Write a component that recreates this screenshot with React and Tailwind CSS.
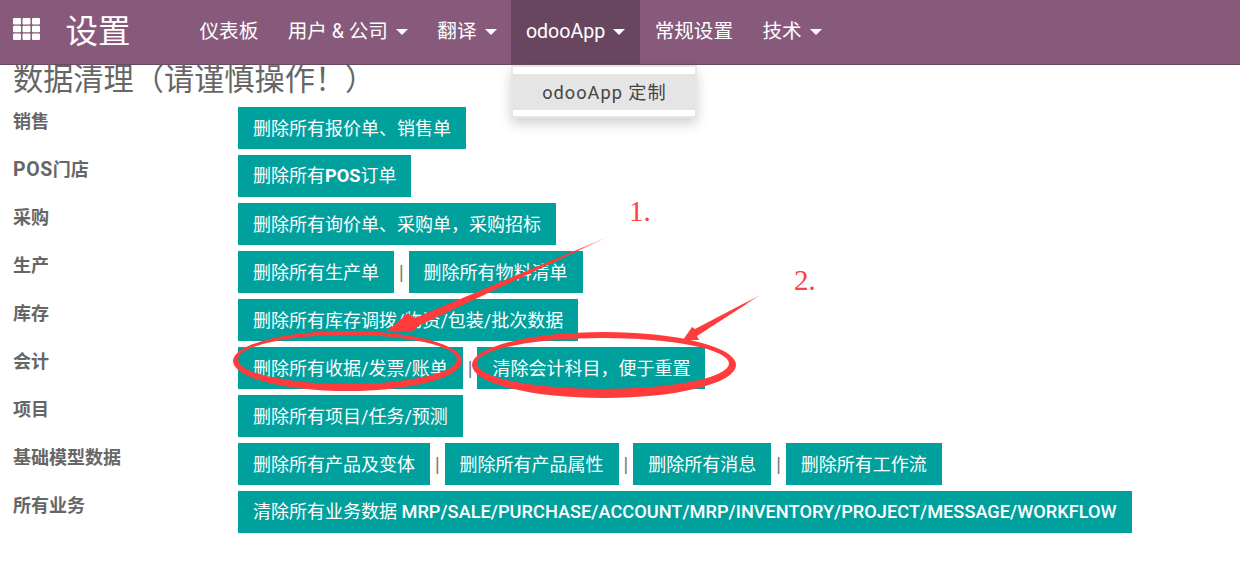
const FONT = "font-['Roboto','Noto_Sans_CJK_SC',sans-serif]"

const navItems = [
  { label: '仪表板' },
  { label: '用户 & 公司', caret: true },
  { label: '翻译', caret: true },
  { label: 'odooApp', caret: true, active: true },
  { label: '常规设置' },
  { label: '技术', caret: true },
]

const rows = [
  { label: '销售', buttons: ['删除所有报价单、销售单'] },
  { label: <><span className="text-[19.5px] tracking-[0.6px]">POS</span>门店</>, buttons: [<>删除所有<b className="text-[18.2px] font-bold">POS</b>订单</>] },
  { label: '采购', buttons: ['删除所有询价单、采购单，采购招标'] },
  { label: '生产', buttons: ['删除所有生产单', '删除所有物料清单'] },
  { label: '库存', buttons: ['删除所有库存调拨/物资/包装/批次数据'] },
  { label: '会计', buttons: ['删除所有收据/发票/账单', '清除会计科目，便于重置'] },
  { label: '项目', buttons: ['删除所有项目/任务/预测'] },
  { label: '基础模型数据', buttons: ['删除所有产品及变体', '删除所有产品属性', '删除所有消息', '删除所有工作流'] },
  { label: '所有业务', buttons: [<>清除所有业务数据 <span className="text-[18.2px] font-medium tracking-[0.02px]">MRP/SALE/PURCHASE/ACCOUNT/MRP/INVENTORY/PROJECT/MESSAGE/WORKFLOW</span></>] },
]

function Caret() {
  return <span className="ml-2 inline-block border-x-[6px] border-t-[6px] border-x-transparent border-t-white" />
}

function AppsIcon() {
  return (
    <svg width="27" height="22" viewBox="0 0 27 22" className="-mt-[6px] fill-white">
      {[0, 7.75, 15.5].map((y) =>
        [0, 9.5, 19].map((x) => <rect key={`${x}-${y}`} x={x} y={y} width="8" height="6.5" rx="1" />)
      )}
    </svg>
  )
}

function Navbar() {
  return (
    <nav className="flex h-[65px] items-stretch border-b border-[#6b4862] bg-[#875a7b] text-white">
      <div className="ml-[13px] flex w-[52.5px] items-center"><AppsIcon /></div>
      <div className="flex w-[119.3px] items-center text-[32.5px]">设置</div>
      <div className="flex text-[19.6px]">
        {navItems.map((item) => (
          <div
            key={item.label}
            className={`relative flex items-center px-[14.7px] ${item.active ? 'bg-[#68465f]' : ''}`}
          >
            {item.label}
            {item.caret && <Caret />}
            {item.active && <Dropdown />}
          </div>
        ))}
      </div>
    </nav>
  )
}

function Dropdown() {
  return (
    <div className="absolute left-0 top-[65px] z-10 w-[186px] border-2 border-[#e6e6e6] bg-white pb-[6px] pt-[7px] shadow-[0_6px_12px_rgba(0,0,0,0.18)]">
      <div className="flex h-[36px] items-center bg-[#e5e5e5] pl-[29px] pt-[2px] text-[18.2px] tracking-[1px] text-[#444]">
        odooApp 定制
      </div>
    </div>
  )
}

function Row({ label, buttons }) {
  return (
    <div className="flex">
      <div className="w-[225px] shrink-0 pt-[1px] text-[18px] font-bold leading-[28px] text-[#666]">{label}</div>
      <div className="flex items-center">
        {buttons.map((text, i) => (
          <div key={i} className="flex items-center">
            {i > 0 && <span className="w-[14.6px] text-center font-['Liberation_Sans',sans-serif] text-[18px] text-[#777]">|</span>}
            <button className="h-[42px] whitespace-nowrap bg-[#00a09d] px-[15px] text-[18px] text-white">{text}</button>
          </div>
        ))}
      </div>
    </div>
  )
}

function Annotations() {
  return (
    <>
      <svg width="1240" height="562" className="pointer-events-none absolute left-0 top-0 z-20">
        <defs>
          <linearGradient id="tail1" x1="612" y1="235" x2="400" y2="330" gradientUnits="userSpaceOnUse">
            <stop offset="0" stopColor="#ff3b3b" stopOpacity="0.1" />
            <stop offset="0.2" stopColor="#ff3b3b" />
          </linearGradient>
          <linearGradient id="tail2" x1="762" y1="294" x2="690" y2="335" gradientUnits="userSpaceOnUse">
            <stop offset="0" stopColor="#ff3b3b" stopOpacity="0.2" />
            <stop offset="0.25" stopColor="#ff3b3b" />
          </linearGradient>
        </defs>
        <path d="M612 235 L415 318 L408 313 L386 332 L412 332 L420 325 Z" fill="url(#tail1)" />
        <path d="M762 294 L695 329 L692 327 L683 340 L699 340 L697 336 Z" fill="url(#tail2)" />
        <path
          fillRule="evenodd"
          fill="#ff3b3b"
          d="M233 361 a114.5 30 0 1 0 229 0 a114.5 30 0 1 0 -229 0 Z M238 359.5 a109.5 24.5 0 1 0 219 0 a109.5 24.5 0 1 0 -219 0 Z"
        />
        <path
          fillRule="evenodd"
          fill="#ff3b3b"
          d="M472 365 a132 33 0 1 0 264 0 a132 33 0 1 0 -264 0 Z M477 363.5 a126 25.5 0 1 0 252 0 a126 25.5 0 1 0 -252 0 Z"
        />
      </svg>
      <span className="absolute left-[629px] top-[190px] z-20 font-['Liberation_Serif',serif] text-[29px] text-[#ff4040]">1.</span>
      <span className="absolute left-[794px] top-[259px] z-20 font-['Liberation_Serif',serif] text-[29px] text-[#ff4040]">2.</span>
    </>
  )
}

export default function App() {
  return (
    <div className={`relative h-[562px] overflow-hidden bg-white ${FONT}`}>
      <Navbar />
      <main className="pl-[13px]">
        <h1 className="h-[42px] text-[30.2px] leading-[30px] text-[#666]">数据清理（请谨慎操作！）</h1>
        <div className="flex flex-col gap-[6px]">
          {rows.map((row, i) => <Row key={i} {...row} />)}
        </div>
      </main>
      <Annotations />
    </div>
  )
}
